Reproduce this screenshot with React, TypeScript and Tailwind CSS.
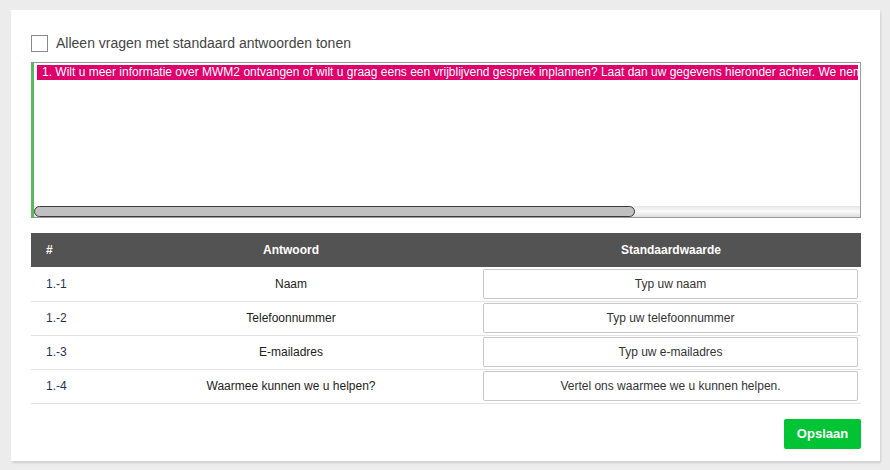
import { useState } from "react";

const rows = [
  { id: "1.-1", answer: "Naam", placeholder: "Typ uw naam" },
  { id: "1.-2", answer: "Telefoonnummer", placeholder: "Typ uw telefoonnummer" },
  { id: "1.-3", answer: "E-mailadres", placeholder: "Typ uw e-mailadres" },
  { id: "1.-4", answer: "Waarmee kunnen we u helpen?", placeholder: "Vertel ons waarmee we u kunnen helpen." },
];

export default function App() {
  const [onlyDefaults, setOnlyDefaults] = useState(false);

  return (
    <div className="h-[470px] w-[890px] bg-[#ececec] pl-[11px] pt-[10px] font-['Liberation_Sans',Arial,sans-serif]">
      <div className="flex h-[451px] w-[869px] flex-col bg-white px-[20px] pt-[25px] shadow-[1px_2px_2px_rgba(0,0,0,0.12)]">

        <label className="flex h-[17px] items-center gap-[8px] text-[14px] text-[#444]">
          <input
            type="checkbox"
            checked={onlyDefaults}
            onChange={(e) => setOnlyDefaults(e.target.checked)}
            className="h-[17px] w-[17px] appearance-none border border-[#8a8a8a] bg-white checked:bg-[#5cb85c]"
          />
          Alleen vragen met standaard antwoorden tonen
        </label>

        <div className="mt-[10px] flex h-[156px] w-[830px] flex-col border border-l-[3px] border-[#999] border-l-[#5cb85c]">
          <div className="ml-[3px] mr-[2px] mt-[2px] h-[15px] overflow-hidden bg-[#e0006c] pl-[5px] text-[12px] leading-[15px] text-white">
            <span className="block w-[1200px] whitespace-nowrap">
              1. Wilt u meer informatie over MWM2 ontvangen of wilt u graag eens een vrijblijvend gesprek inplannen? Laat dan uw gegevens hieronder achter. We nemen zo snel mogelijk contact met u op.
            </span>
          </div>
          <div className="flex-1" />
          <div className="flex h-[11px] bg-gradient-to-b from-[#e6e6e6] via-[#fafafa] to-[#dcdcdc]">
            <div className="h-[11px] w-[601px] rounded-full border border-[#3a3a3a] bg-[#c0c0c0]" />
          </div>
        </div>

        <table className="mt-[15px] w-[830px] table-fixed border-collapse text-[12px]">
          <thead>
            <tr className="h-[34px] bg-[#535353] font-bold text-white">
              <th className="w-[70px] pl-[15px] text-left">#</th>
              <th className="w-[380px] text-center">Antwoord</th>
              <th className="w-[380px] text-center">Standaardwaarde</th>
            </tr>
          </thead>
          <tbody>
            {rows.map((row) => (
              <tr key={row.id} className="h-[34px] border-b border-[#e3e3e3]">
                <td className="pl-[15px] text-[#1f3350]">{row.id}</td>
                <td className="text-center text-[#222]">{row.answer}</td>
                <td className="pl-[2px] pr-[3px]">
                  <input
                    placeholder={row.placeholder}
                    className="h-[30px] w-full rounded-[2px] border border-[#c8c8c8] text-center text-[12px] text-[#333] outline-none placeholder:text-[#333]"
                  />
                </td>
              </tr>
            ))}
          </tbody>
        </table>

        <div className="mt-[15px] flex w-[830px] justify-end">
          <button className="h-[30px] w-[77px] rounded-[2px] bg-[#00c434] text-[13px] font-bold text-white">
            Opslaan
          </button>
        </div>

      </div>
    </div>
  );
}
